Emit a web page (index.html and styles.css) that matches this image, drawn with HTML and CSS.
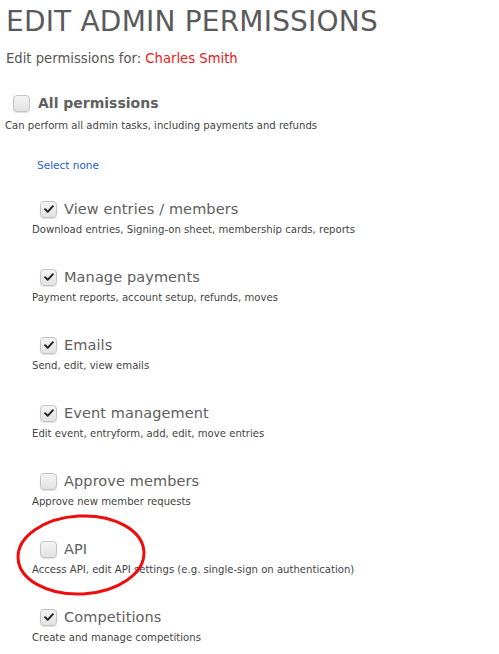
FILE: index.html
```html
<!DOCTYPE html>
<html>
<head>
<meta charset="utf-8">
<link rel="stylesheet" href="styles.css">
</head>
<body>
<div class="page">
  <h1 class="title">EDIT ADMIN PERMISSIONS</h1>
  <p class="sub">Edit permissions for: <span class="name">Charles Smith</span></p>

  <div class="all">
    <div class="row"><span class="cb"></span><span class="all-label">All permissions</span></div>
    <p class="desc all-desc">Can perform all admin tasks, including payments and refunds</p>
    <a class="select-none">Select none</a>
  </div>

  <div class="perms">
    <div class="perm">
      <div class="row"><span class="cb on"><svg viewBox="0 0 16 16"><path d="M3.5 8.2l3 3 6-6.4"/></svg></span><span class="label">View entries / members</span></div>
      <p class="desc">Download entries, Signing-on sheet, membership cards, reports</p>
    </div>
    <div class="perm">
      <div class="row"><span class="cb on"><svg viewBox="0 0 16 16"><path d="M3.5 8.2l3 3 6-6.4"/></svg></span><span class="label">Manage payments</span></div>
      <p class="desc">Payment reports, account setup, refunds, moves</p>
    </div>
    <div class="perm">
      <div class="row"><span class="cb on"><svg viewBox="0 0 16 16"><path d="M3.5 8.2l3 3 6-6.4"/></svg></span><span class="label">Emails</span></div>
      <p class="desc">Send, edit, view emails</p>
    </div>
    <div class="perm">
      <div class="row"><span class="cb on"><svg viewBox="0 0 16 16"><path d="M3.5 8.2l3 3 6-6.4"/></svg></span><span class="label">Event management</span></div>
      <p class="desc">Edit event, entryform, add, edit, move entries</p>
    </div>
    <div class="perm">
      <div class="row"><span class="cb"></span><span class="label">Approve members</span></div>
      <p class="desc">Approve new member requests</p>
    </div>
    <div class="perm">
      <div class="row"><span class="cb"></span><span class="label">API</span></div>
      <p class="desc">Access API, edit API settings (e.g. single-sign on authentication)</p>
    </div>
    <div class="perm">
      <div class="row"><span class="cb on"><svg viewBox="0 0 16 16"><path d="M3.5 8.2l3 3 6-6.4"/></svg></span><span class="label">Competitions</span></div>
      <p class="desc">Create and manage competitions</p>
    </div>
  </div>

  <svg class="circle" width="160" height="110" viewBox="0 0 160 110"><ellipse cx="65" cy="44" rx="63" ry="39" transform="rotate(-3 65 44)"/></svg>
</div>
</body>
</html>
```
FILE: styles.css
```css
html, body { margin: 0; padding: 0; background: #fff; }
body { font-family: "DejaVu Sans", "Liberation Sans", sans-serif; color: #555; }
.page { position: relative; width: 499px; height: 654px; padding-left: 6px; box-sizing: border-box; overflow: hidden; }
.title { margin: 0; padding-top: 4px; font-size: 28px; line-height: 36px; font-weight: normal; color: #5a5a5c; letter-spacing: 0.2px; }
.sub { margin: 10px 0 0 0; font-size: 13.2px; line-height: 17px; color: #555; }
.name { color: #e8191c; }
.row { display: flex; align-items: center; height: 20px; }
.all { margin-top: 26px; }
.all .row { padding-left: 7px; }
.all-label { margin-left: 8px; font-size: 14px; font-weight: bold; color: #5f5f5f; }
.desc { margin: 0; font-size: 10.1px; line-height: 16px; color: #444; }
.all-desc { margin-top: 5px; margin-left: -1px; }
.select-none { display: block; margin: 23px 0 0 31px; font-size: 10.5px; line-height: 16px; color: #1d5fd2; }
.perms { margin-top: 26px; padding-left: 26px; display: flex; flex-direction: column; gap: 29px; }
.perm .row { padding-left: 8px; }
.perm .desc { margin-top: 3px; }
.label { margin-left: 7px; font-size: 14.5px; color: #606060; letter-spacing: 0.1px; }
.cb { flex: none; width: 15px; height: 15px; border: 1px solid #c4c4c4; border-radius: 4px; background: linear-gradient(#f4f4f4, #e2e2e2); box-shadow: 0 1px 1px rgba(0,0,0,0.12); display: flex; align-items: center; justify-content: center; }
.cb svg { width: 14px; height: 14px; }
.cb path { fill: none; stroke: #222; stroke-width: 2.2; stroke-linecap: round; stroke-linejoin: round; }
.circle { position: absolute; left: 16px; top: 511px; }
.circle ellipse { fill: none; stroke: #ee0d0d; stroke-width: 3; }
```
